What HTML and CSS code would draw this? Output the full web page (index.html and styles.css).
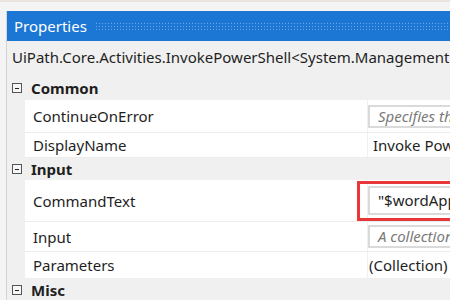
FILE: index.html
```html
<!DOCTYPE html>
<html>
<head>
<meta charset="utf-8">
<link rel="stylesheet" href="styles.css">
</head>
<body>
<div class="panel">
  <div class="title"><span class="title-text">Properties</span><span class="grip"></span></div>
  <div class="typename">UiPath.Core.Activities.InvokePowerShell&lt;System.Management.Automation.PSObject&gt;</div>
  <div class="cat"><span class="toggle"></span><span class="cat-name">Common</span></div>
  <div class="row row-tall">
    <div class="name">ContinueOnError</div>
    <div class="value"><div class="box placeholder">Specifies that the automation should continue even when the activity throws an error.</div></div>
  </div>
  <div class="row row-plain">
    <div class="name">DisplayName</div>
    <div class="value"><span class="vtext">Invoke PowerShell</span></div>
  </div>
  <div class="cat cat-input"><span class="toggle"></span><span class="cat-name">Input</span></div>
  <div class="row row-cmd">
    <div class="name">CommandText</div>
    <div class="value value-cmd"><div class="red"><div class="box cmd">"$wordApp = New-Object -ComObject Word.Application"</div></div></div>
  </div>
  <div class="row row-tall2">
    <div class="name">Input</div>
    <div class="value"><div class="box placeholder">A collection of PSObjects that are passed to the writer</div></div>
  </div>
  <div class="row row-plain row-last">
    <div class="name">Parameters</div>
    <div class="value"><span class="vtext vtext-left">(Collection)</span></div>
  </div>
  <div class="cat cat-misc"><span class="toggle"></span><span class="cat-name">Misc</span></div>
</div>
</body>
</html>
```
FILE: styles.css
```css
html, body {
  margin: 0;
  padding: 0;
}
body {
  width: 450px;
  height: 300px;
  overflow: hidden;
  background: #f4f4f4;
  border-top: 2px solid #ebe3e0;
  box-sizing: border-box;
  font-family: "Noto Sans", "Open Sans", sans-serif;
  color: #1e1e1e;
}
.panel {
  margin: 9px 0 0 6px;
  width: 700px;
  border-left: 1px solid #d4d4d4;
  background: #f0f0f0;
}
.title {
  height: 30px;
  background: #1c76d4;
  display: flex;
  align-items: center;
  padding-left: 7px;
}
.title-text {
  color: #ffffff;
  font-size: 15px;
  line-height: 30px;
}
.grip {
  flex: 1;
  height: 9px;
  margin-left: 8px;
  background-image: radial-gradient(circle, #6fa7e6 0.8px, transparent 1px);
  background-size: 3px 3px;
}
.typename {
  height: 35px;
  line-height: 33px;
  padding-left: 5px;
  font-size: 15px;
  white-space: nowrap;
}
.cat {
  height: 24px;
  display: flex;
  align-items: center;
  padding-left: 5px;
}
.toggle {
  width: 8px;
  height: 8px;
  border: 1px solid #555;
  position: relative;
  background: #f6f6f6;
}
.toggle::after {
  content: "";
  position: absolute;
  left: 2px;
  top: 3.5px;
  width: 4px;
  height: 1px;
  background: #222;
}
.cat-name {
  font-weight: bold;
  font-size: 15px;
  margin-left: 9px;
}
.cat-input { height: 22px; }
.cat-misc { height: 24px; }
.row {
  margin-left: 18px;
  display: grid;
  grid-template-columns: 342px 1fr;
  background: #ffffff;
  border-bottom: 1px solid #ececec;
}
.row-last { border-bottom: none; }
.name {
  padding-left: 8px;
  font-size: 15px;
  display: flex;
  align-items: center;
  white-space: nowrap;
}
.value {
  border-left: 1px solid #f0f0f0;
  display: flex;
  align-items: center;
  white-space: nowrap;
  overflow: hidden;
}
.value-cmd { overflow: visible; }
.row-tall { height: 32px; }
.row-plain { height: 24px; }
.row-cmd { height: 41px; }
.row-tall2 { height: 29px; }
.row-last { height: 26px; }
.box {
  height: 23px;
  width: 100%;
  border: 2px solid #dadada;
  border-right: none;
  box-sizing: border-box;
  background: #fff;
  font-size: 15px;
  line-height: 19px;
  padding-left: 8px;
  overflow: hidden;
}
.placeholder {
  color: #7a7a7a;
  font-style: italic;
}
.vtext {
  font-size: 15px;
  padding-left: 5px;
}
.vtext-left { padding-left: 1px; }
.red {
  margin-left: -11px;
  width: calc(100% + 11px);
  height: 40px;
  border: 3px solid #e8373a;
  border-right: none;
  box-sizing: border-box;
  display: flex;
  align-items: center;
  padding-left: 8px;
  overflow: hidden;
}
.cmd {
  height: 29px;
  line-height: 25px;
}
```
